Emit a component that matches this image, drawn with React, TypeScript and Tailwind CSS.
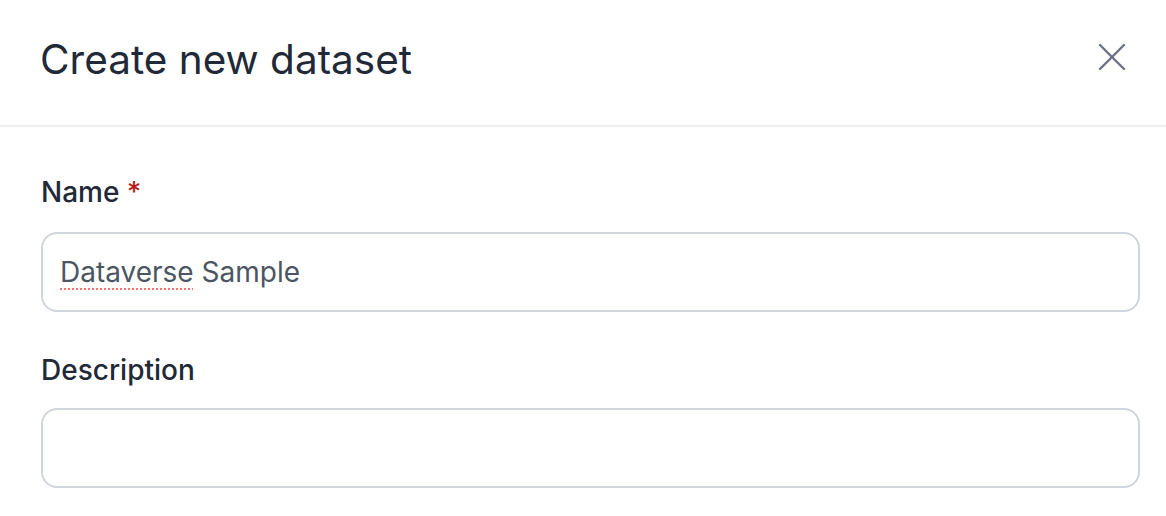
import React from "react";

export default function App() {
  return (
    <div className="w-[1166px] h-[516px] bg-white overflow-hidden" style={{ fontFamily: "Inter, 'Noto Sans', sans-serif" }}>
      <div className="h-[127px] border-b-2 border-[#f0f0f4] pl-[40px] pr-[30px] flex items-center justify-between">
        <h1 className="text-[40.5px] leading-[48px] text-[#1f2937] font-normal -mt-[6px]">Create new dataset</h1>
        <button className="w-[48px] h-[48px] flex items-center justify-center text-[#6b7280] -mt-[12px]">
          <svg width="48" height="48" viewBox="0 0 24 24" fill="none" stroke="currentColor" strokeWidth="1.2" strokeLinecap="round">
            <path d="M18 6 6 18" />
            <path d="m6 6 12 12" />
          </svg>
        </button>
      </div>
      <div className="pl-[41px] pr-[26px] pt-[47px] flex flex-col">
        <label className="text-[28px] leading-[36px] font-medium text-[#1f2937]">
          Name <span className="text-[#b91c1c]">*</span>
        </label>
        <div className="mt-[22px] h-[80px] rounded-[16px] border-2 border-[#d1d5db] flex items-center px-[17px]">
          <span className="text-[28px] text-[#4b5563]">
            <span className="underline decoration-dotted decoration-[#f87171] decoration-2 underline-offset-[6px]">Dataverse</span> Sample
          </span>
        </div>
        <label className="mt-[40px] text-[28px] leading-[36px] font-medium text-[#1f2937]">Description</label>
        <div className="mt-[20px] h-[80px] rounded-[16px] border-2 border-[#d1d5db]" />
      </div>
    </div>
  );
}
